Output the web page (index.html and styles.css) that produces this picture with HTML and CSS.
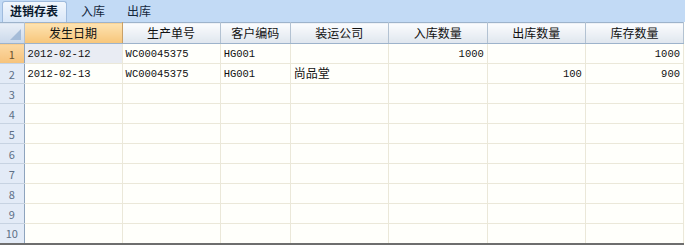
FILE: index.html
```html
<!DOCTYPE html>
<html>
<head>
<meta charset="utf-8">
<link rel="stylesheet" href="styles.css">
</head>
<body>
<div class="app">
  <div class="tabs">
    <div class="tab active">进销存表</div>
    <div class="tab">入库</div>
    <div class="tab">出库</div>
  </div>
  <table class="grid">
    <colgroup>
      <col style="width:24px"><col style="width:98px"><col style="width:98px"><col style="width:70px"><col style="width:98px"><col style="width:99px"><col style="width:98px"><col style="width:98px">
    </colgroup>
    <thead>
      <tr class="hdr">
        <th class="corner"><span class="tri"></span></th>
        <th class="sel">发生日期</th>
        <th>生产单号</th>
        <th>客户编码</th>
        <th>装运公司</th>
        <th>入库数量</th>
        <th>出库数量</th>
        <th>库存数量</th>
      </tr>
    </thead>
    <tbody>
      <tr><td class="rh selrow">1</td><td class="cur">2012-02-12</td><td>WC00045375</td><td>HG001</td><td></td><td class="num">1000</td><td></td><td class="num">1000</td></tr>
      <tr><td class="rh">2</td><td>2012-02-13</td><td>WC00045375</td><td>HG001</td><td><span class="cjk">尚品堂</span></td><td></td><td class="num">100</td><td class="num">900</td></tr>
      <tr><td class="rh">3</td><td></td><td></td><td></td><td></td><td></td><td></td><td></td></tr>
      <tr><td class="rh">4</td><td></td><td></td><td></td><td></td><td></td><td></td><td></td></tr>
      <tr><td class="rh">5</td><td></td><td></td><td></td><td></td><td></td><td></td><td></td></tr>
      <tr><td class="rh">6</td><td></td><td></td><td></td><td></td><td></td><td></td><td></td></tr>
      <tr><td class="rh">7</td><td></td><td></td><td></td><td></td><td></td><td></td><td></td></tr>
      <tr><td class="rh">8</td><td></td><td></td><td></td><td></td><td></td><td></td><td></td></tr>
      <tr><td class="rh">9</td><td></td><td></td><td></td><td></td><td></td><td></td><td></td></tr>
      <tr><td class="rh">10</td><td></td><td></td><td></td><td></td><td></td><td></td><td></td></tr>
    </tbody>
  </table>
</div>
</body>
</html>
```
FILE: styles.css
```css
html, body {
  margin: 0;
  padding: 0;
  background: #ffffff;
}
.app {
  width: 685px;
  height: 245px;
  background: #fffffb;
  overflow: hidden;
  font-family: "Noto Sans CJK SC", sans-serif;
  font-size: 12px;
  color: #000;
}
.tabs {
  height: 22px;
  background: #c2daf5;
  display: flex;
  align-items: flex-end;
  padding-left: 2px;
  box-sizing: border-box;
}
.tab {
  height: 20px;
  line-height: 18px;
  color: #15283d;
}
.tab.active {
  font-weight: bold;
  padding: 0 8px 0 7px;
  background: linear-gradient(#f2f7fd, #d9e7f8);
  border: 1px solid #9fbbdd;
  border-bottom: none;
  border-radius: 3px 3px 0 0;
  box-sizing: border-box;
  height: 21px;
  color: #0a1a2e;
}
.tab:nth-child(2) { margin-left: 14px; }
.tab:nth-child(3) { margin-left: 22px; }
.grid {
  border-collapse: collapse;
  table-layout: fixed;
  width: 684px;
  border-right: 1px solid #7f8a96;
  border-bottom: 2px solid #6e6e6e;
}
.grid tr { height: 20px; }
.grid tr.hdr { height: 21px; }
.grid th {
  height: 21px;
  box-sizing: border-box;
  padding: 0;
  font-weight: normal;
  font-size: 12px;
  background: linear-gradient(#fbfcfe, #dfe6ee);
  border-top: 1px solid #9db3cb;
  border-bottom: 1px solid #9db3cb;
  border-right: 1px solid #b3c2d2;
  color: #111;
  text-align: center;
  line-height: 18px;
  overflow: hidden;
}
.grid th.sel {
  background: linear-gradient(#fde3b2, #f7c579);
  border-right-color: #c9a067;
}
.grid th.corner {
  background: linear-gradient(#e9eff7, #cad8ea);
  position: relative;
}
.tri {
  position: absolute;
  right: 3px;
  bottom: 3px;
  width: 0;
  height: 0;
  border-left: 11px solid transparent;
  border-bottom: 11px solid #a5bcd8;
}
.grid td {
  height: 20px;
  box-sizing: border-box;
  padding: 0 3px;
  border-right: 1px solid #ebe8d9;
  border-bottom: 1px solid #ebe8d9;
  font-family: "Liberation Mono", "Noto Sans CJK SC", monospace;
  font-size: 10.5px;
  line-height: 16px;
  white-space: nowrap;
  overflow: hidden;
  background: #fffffb;
  color: #111;
}
.grid td.rh {
  background: #e3ebf7;
  color: #5d6f86;
  text-align: center;
  padding: 0;
  border-right: 1px solid #8ea4bd;
  border-bottom: 1px solid #c7d3e2;
  font-family: "Noto Sans CJK SC", sans-serif;
  font-size: 11px;
}
.grid td.rh.selrow {
  background: linear-gradient(#fbd9a4, #f6c27b);
  color: #6a5230;
}
.grid td.cur {
  background: #e9ecf3;
}
.grid td.num {
  text-align: right;
  padding-right: 3px;
}
.cjk {
  font-family: "Noto Sans CJK SC", sans-serif;
  font-size: 12px;
  line-height: 16px;
}
```
